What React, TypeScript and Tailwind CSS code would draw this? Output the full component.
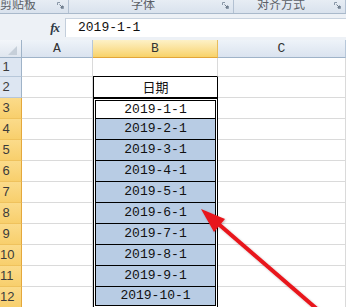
import React from "react";

const mono = "font-['Liberation_Mono',monospace]";
const cjk = "font-['Noto_Sans_CJK_SC',sans-serif]";

const dates = [
  "2019-1-1",
  "2019-2-1",
  "2019-3-1",
  "2019-4-1",
  "2019-5-1",
  "2019-6-1",
  "2019-7-1",
  "2019-8-1",
  "2019-9-1",
  "2019-10-1",
];
const rows = [1, 2, 3, 4, 5, 6, 7, 8, 9, 10, 11, 12];

function Launcher() {
  return (
    <svg width="7" height="7" viewBox="0 0 7 7" className="mt-[2px]">
      <path d="M0.5 3 V0.5 H3" stroke="#8a98a8" fill="none" />
      <path d="M6.5 4 V6.5 H4" stroke="#8a98a8" fill="none" />
      <path d="M2.5 2.5 L5.5 5.5 M5.5 3.5 V5.5 H3.5" stroke="#6d7b8b" fill="none" />
    </svg>
  );
}

function RibbonGroup({ label, width, pad }: { label: string; width: string; pad: string }) {
  return (
    <div className={`${width} h-full flex justify-between border-r border-[#b3c1d2] pr-[4px] overflow-hidden`}>
      <span className={`${pad} ${cjk} text-[12px] leading-[14px] mt-[-3px] text-[#5b5f66]`}>{label}</span>
      <Launcher />
    </div>
  );
}

export default function App() {
  return (
    <div className="relative w-[346px] h-[307px] overflow-hidden bg-white">
      {/* ribbon group labels */}
      <div className="h-[14px] flex bg-gradient-to-b from-[#e7edf4] to-[#d9e2ed] border-b border-[#a9b9cb]">
        <RibbonGroup label="剪贴板" width="w-[69px]" pad="pl-0" />
        <RibbonGroup label="字体" width="w-[165px]" pad="pl-[62px]" />
        <RibbonGroup label="对齐方式" width="w-[112px]" pad="pl-[23px]" />
      </div>

      {/* formula bar */}
      <div className="h-[26px] bg-[#edf1f6] pt-[4px] pb-[3px]">
        <div className="h-[19px] flex">
          <div className="w-[66px] flex items-center justify-end pr-[6px] border-r border-[#c3cedb]">
            <span className="font-['Liberation_Serif',serif] italic font-bold text-[13px] text-[#2f3a45] tracking-[-1px]">
              fx
            </span>
          </div>
          <div className={`flex-1 bg-white border-t border-[#c9d3df] flex items-center pl-[12px] ${mono} text-[13px] text-[#111]`}>
            2019-1-1
          </div>
        </div>
      </div>

      {/* sheet */}
      <div className="flex">
        {/* row headers */}
        <div className="w-[22px] flex flex-col">
          <div className="h-[18px] border-b border-r border-[#9fb3c8] bg-gradient-to-b from-[#f3f6fa] to-[#dfe6ef] flex items-end justify-end pr-[4px] pb-[2px]">
            <svg width="9" height="9" viewBox="0 0 9 9">
              <path d="M9 0 L9 9 L0 9 Z" fill="#c6cfd9" />
            </svg>
          </div>
          {rows.map((r) => {
            const sel = r >= 3;
            return (
              <div
                key={r}
                className={`${r === 1 ? "h-[19px]" : "h-[21px]"} flex items-center border-r border-b ${
                  sel
                    ? "bg-gradient-to-b from-[#fbdb8a] to-[#f8cf6c] border-b-[#efc25d] border-r-[#e4a83c]"
                    : "bg-[#dde6f2] border-b-[#b7c7d9] border-r-[#9fb3c8]"
                }`}
              >
                <span className={`w-[12px] text-center font-['Liberation_Sans_Narrow','Liberation_Sans',sans-serif] text-[13px] text-[#3b3b3b]`}>
                  {r}
                </span>
              </div>
            );
          })}
        </div>

        {/* column A */}
        <div className="w-[71px] flex flex-col">
          <div className={`h-[18px] border-b border-r border-b-[#9fb3c8] border-r-[#b7c7d9] bg-gradient-to-b from-[#eef3f9] to-[#dae3ef] flex items-center justify-center ${mono} text-[13px] text-[#333]`}>
            A
          </div>
          {rows.map((r) => (
            <div key={r} className={`${r === 1 ? "h-[19px]" : "h-[21px]"} border-b border-r border-[#dadada]`} />
          ))}
        </div>

        {/* column B */}
        <div className="w-[125px] flex flex-col">
          <div className={`h-[18px] border-b border-r border-b-[#e2a53a] border-r-[#e8bd5c] bg-gradient-to-b from-[#fdf1c6] to-[#f8d267] flex items-center justify-center ${mono} text-[13px] text-[#333]`}>
            B
          </div>
          <div className="h-[19px] border-b border-b-black border-r border-r-[#dadada]" />
          <div className={`h-[21px] border-l border-r border-b border-black flex items-center justify-center ${cjk} text-[13px] text-[#111]`}>
            日期
          </div>
          <div className="h-[210px] border-[3px] border-double border-black bg-white flex flex-col">
            {dates.map((d, i) => (
              <div
                key={d}
                className={`${i === 0 || i === 9 ? "h-[18px]" : "h-[21px]"} ${i === 9 ? "" : "border-b border-black"} ${
                  i === 0 ? "bg-white" : "bg-[#b8cce4]"
                } flex items-center justify-center ${mono} text-[13px] text-[#111]`}
              >
                {d}
              </div>
            ))}
          </div>
        </div>

        {/* column C */}
        <div className="w-[128px] flex flex-col">
          <div className={`h-[18px] border-b border-r border-b-[#9fb3c8] border-r-[#b7c7d9] bg-gradient-to-b from-[#eef3f9] to-[#dae3ef] flex items-center justify-center ${mono} text-[13px] text-[#333]`}>
            C
          </div>
          {rows.map((r) => (
            <div key={r} className={`${r === 1 ? "h-[19px]" : "h-[21px]"} border-b border-r border-[#dadada]`} />
          ))}
        </div>
      </div>

      {/* red arrow annotation */}
      <svg className="absolute left-0 top-0 pointer-events-none" width="346" height="307" viewBox="0 0 346 307">
        <defs>
          <filter id="soft" x="-20%" y="-20%" width="140%" height="140%">
            <feGaussianBlur in="SourceAlpha" stdDeviation="1.2" />
            <feOffset dx="1" dy="1" result="b" />
            <feFlood floodColor="#000" floodOpacity="0.25" />
            <feComposite in2="b" operator="in" />
            <feMerge>
              <feMergeNode />
              <feMergeNode in="SourceGraphic" />
            </feMerge>
          </filter>
        </defs>
        <g filter="url(#soft)">
          <line x1="215" y1="221" x2="332" y2="322" stroke="#e8141a" strokeWidth="4" />
          <polygon points="201,209 225,219 214,232" fill="#e8141a" />
        </g>
      </svg>
    </div>
  );
}
